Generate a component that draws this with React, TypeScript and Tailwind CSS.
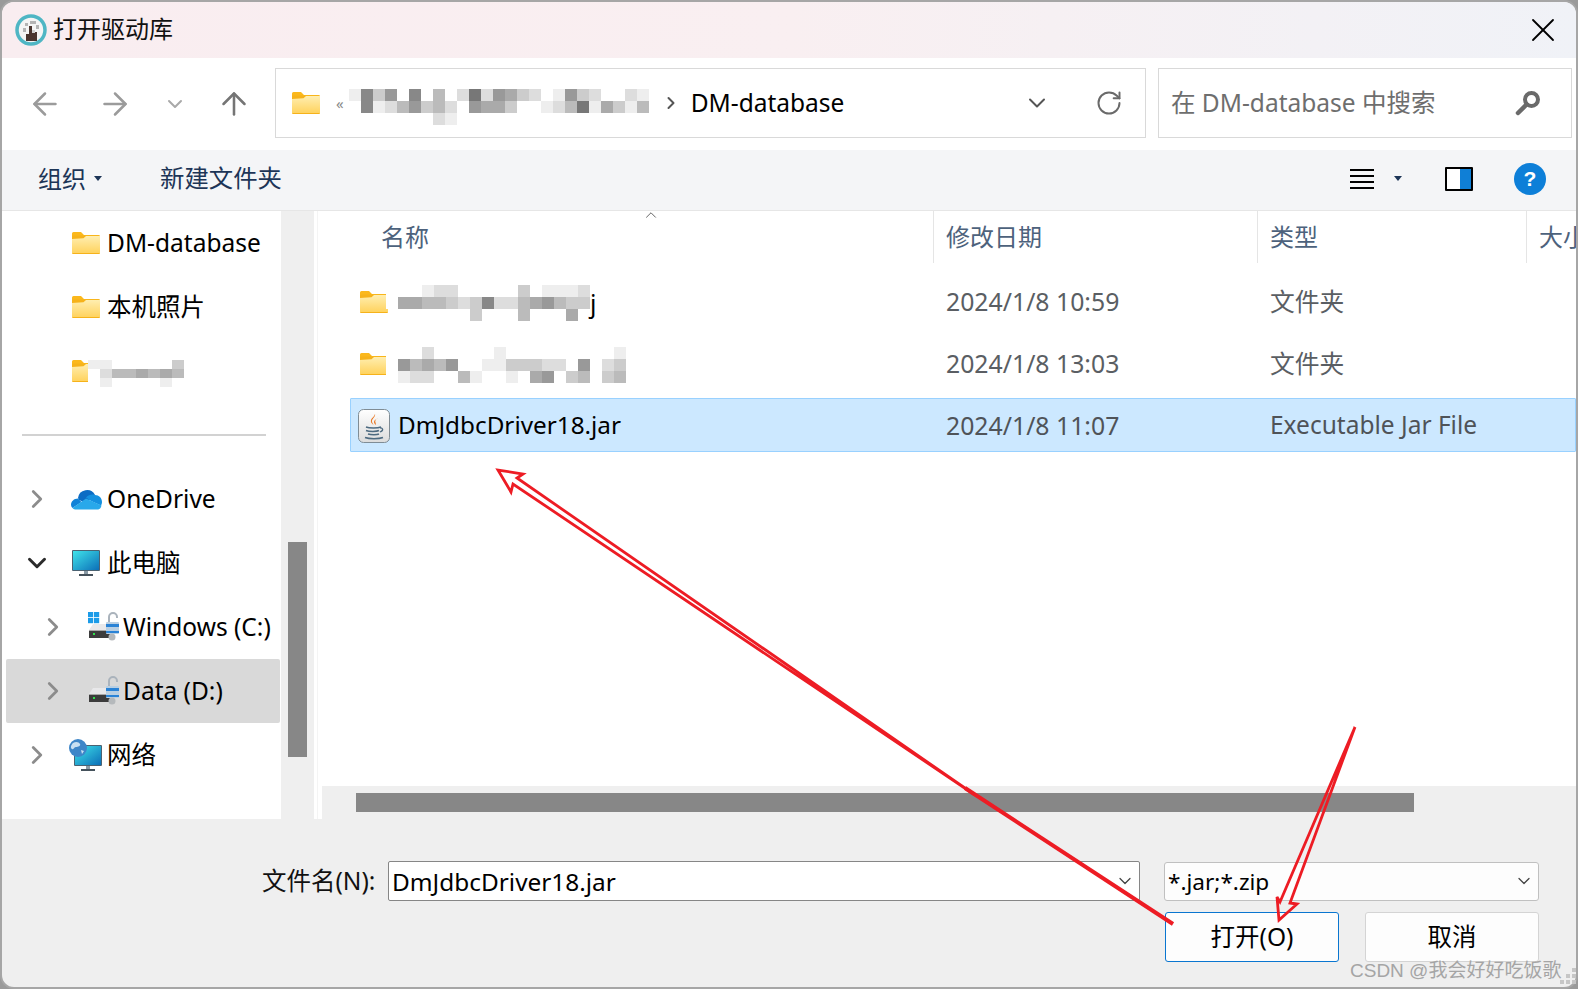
import React from "react";
import { ArrowLeft, ArrowRight, ArrowUp, ChevronDown, ChevronRight, ChevronUp, RotateCw, X } from "lucide-react";

const Mosaic = ({ rows, w = 12, h = 12, className = "" }: { rows: string[]; w?: number; h?: number; className?: string }) => (
  <div className={"absolute flex flex-col " + className}>
    {rows.map((r, i) => (
      <div key={i} className="flex">
        {r.split("").map((c, j) => (
          <div key={j} style={{ width: w, height: h, background: c === "." ? "transparent" : `#${c}${c}${c}` }} />
        ))}
      </div>
    ))}
  </div>
);

const Folder = ({ className = "" }: { className?: string }) => (
  <svg viewBox="0 0 28 22" className={"w-[28px] h-[22px] shrink-0 " + className}>
    <path d="M0 1.5A1.5 1.5 0 0 1 1.5 0h7.5l3 3h14.5A1.5 1.5 0 0 1 28 4.5V6H0z" fill="#fbb81c" />
    <rect x="0" y="3.5" width="28" height="18.5" rx="1" fill="#f6b21a" />
    <defs>
      <linearGradient id="fg" x1="0" y1="0" x2="0" y2="1">
        <stop offset="0" stopColor="#ffeeb0" />
        <stop offset="1" stopColor="#ffd35f" />
      </linearGradient>
    </defs>
    <path d="M0 7l11.5-.8L14 4h14v17H0z" fill="url(#fg)" />
  </svg>
);

const OneDrive = () => (
  <svg viewBox="0 0 32 22" className="w-[32px] h-[22px] shrink-0">
    <path d="M8 10a9 9 0 0 1 17-3l-9 8-7-3z" fill="#0c6cc4" />
    <path d="M8 10.5c-4 0-7 3-7 6 0 1.5.5 2.5 1.5 3.5l9-6z" fill="#0f82d8" />
    <path d="M16 9.5c3-3 6-3.5 9-2.5 4 0 7 3 7 7 0 1.500-.5 2.500-1 3.500L21 13z" fill="#1490df" />
    <path d="M2.500 20c1 1 2 1.500 4 1.500h21c2 0 3.500-1.500 4-4L16 10.500z" fill="#28a8ea" />
  </svg>
);

const Monitor = ({ className = "" }: { className?: string }) => (
  <svg viewBox="0 0 28 26" className={"w-[28px] h-[26px] shrink-0 " + className}>
    <defs>
      <linearGradient id="mg" x1="0" y1="0" x2="1" y2="1">
        <stop offset="0" stopColor="#3fe3ea" />
        <stop offset="1" stopColor="#0c6fb8" />
      </linearGradient>
    </defs>
    <rect x="0" y="0" width="28" height="21" rx="1" fill="#4b6272" />
    <rect x="1" y="1" width="26" height="19" fill="url(#mg)" />
    <rect x="12" y="21" width="4" height="3" fill="#8a9aa5" />
    <rect x="7" y="24" width="14" height="2" fill="#45525c" />
  </svg>
);

const Drive = ({ win }: { win?: boolean }) => (
  <svg viewBox="0 0 32 30" className="w-[32px] h-[30px] shrink-0">
    {win && (
      <g fill="#1b9be8">
        <rect x="0" y="0" width="5.200" height="5.200" />
        <rect x="6" y="0" width="5.200" height="5.200" />
        <rect x="0" y="6" width="5.200" height="5.200" />
        <rect x="6" y="6" width="5.200" height="5.200" />
      </g>
    )}
    <path d="M5 12h16v6H1z" fill="#e8e8ea" />
    <rect x="1" y="18" width="22" height="8" fill="#3c3c3c" />
    <rect x="1" y="18" width="22" height="1" fill="#a8a8a8" />
    <rect x="5" y="21" width="2" height="2" fill="#2fe34a" />
    <path d="M21 11V5a4 4 0 0 1 8 0v1" fill="none" stroke="#aab3bc" strokeWidth="2" />
    <rect x="18" y="10" width="13" height="12" rx="1" fill="#b9cfe2" />
    <rect x="18" y="12" width="13" height="3" fill="#2a83d6" />
    <rect x="18" y="19" width="13" height="2" fill="#2a83d6" />
    <circle cx="24" cy="25" r="3.500" fill="#b5b9bc" />
  </svg>
);

const Jar = () => (
  <svg viewBox="0 0 32 34" className="w-[32px] h-[34px] shrink-0">
    <defs>
      <linearGradient id="jg" x1="0" y1="0" x2="0" y2="1">
        <stop offset="0" stopColor="#ffffff" />
        <stop offset="1" stopColor="#dcdcdc" />
      </linearGradient>
    </defs>
    <rect x="0.500" y="0.500" width="31" height="33" rx="5" fill="url(#jg)" stroke="#7f8c95" />
    <path d="M17 5c1 3-4 5-3 8 .4 1 1 2 1.500 3-2-1.500-3-3-2.500-5 .5-2 3.500-3.500 4-6z" fill="#e8731c" />
    <path d="M20 9c-2 1.500-3.500 2.500-2.500 4.500l.5 2.500c-2-1.500-2.500-3-1.500-4.500C17.500 10.500 19 10 20 9z" fill="#e8731c" />
    <path d="M8 18c3 1.200 12 1.200 15 0M8 21.500c3 1.200 11 1.200 13 0M10 25c3 1 9 1 11 0M7 28.500c4 1.500 14 1.500 18 0" stroke="#4d6a80" strokeWidth="1.500" fill="none" />
    <path d="M22 19c3-.5 4 2.500 0 4" stroke="#4d6a80" strokeWidth="1.300" fill="none" />
  </svg>
);

const AppIcon = () => (
  <svg viewBox="0 0 32 32" className="w-[32px] h-[32px] shrink-0">
    <circle cx="16" cy="16" r="14" fill="#f5f5f5" stroke="#4fb6c4" strokeWidth="3.500" />
    <path d="M10 9h3v3h-3zM15 7h6v3h-6zM21 11h3v4h-3zM8 14h3v4H8z" fill="#b5b5b5" />
    <path d="M14 12h3v6h5v9h-11v-7h3z" fill="#4a352f" />
    <path d="M17 16h3v3h-3z" fill="#d0d0d0" />
  </svg>
);

const Row = ({ chev, indent, open, active, icon, children }: { chev?: boolean; indent?: boolean; open?: boolean; active?: boolean; icon: React.ReactNode; children?: React.ReactNode }) => (
  <div className={"flex items-center h-[64px] ml-[4px] mr-[1px] rounded-[2px] " + (active ? "bg-[#d9d9d9]" : "")}>
    <div className={"flex justify-center shrink-0 " + (indent ? "w-[62px] pl-[31px]" : "w-[62px]")}>
      {chev && (open ? <ChevronDown size={30} strokeWidth={2.4} className="text-[#2b2b2b]" /> : <ChevronRight size={30} strokeWidth={2.2} className="text-[#8c8c8c]" />)}
    </div>
    <div className={"flex items-center justify-center shrink-0 " + (indent ? "w-[32px] ml-[20px] mr-[3px]" : "w-[32px] ml-[2px] mr-[5px]")}>{icon}</div>
    <span className="pt-[1px] text-[24.5px] text-black whitespace-nowrap">{children}</span>
  </div>
);

export default function App() {
  return (
    <div className="relative w-[1578px] h-[989px] overflow-hidden bg-[#9a9a9a]" style={{ fontFamily: "'Noto Sans','Noto Sans CJK SC',sans-serif" }}>
      <div className="w-full h-full flex flex-col overflow-hidden rounded-[14px] border-2 border-[#a6a6a6] bg-[#efefef]">
        {/* title */}
        <div className="h-[56px] shrink-0 flex items-center pl-[13px] pr-[13px] bg-gradient-to-r from-[#f9edf0] via-[#f9eff1] to-[#f0f2f7]">
          <AppIcon />
          <span className="ml-[6px] -mt-[4px] text-[24px] text-[#111] leading-none" style={{ fontFamily: "'Noto Sans CJK SC',sans-serif" }}>打开驱动库</span>
          <X size={40} strokeWidth={1.1} className="ml-auto -mt-[1px] text-black" />
        </div>
        {/* nav */}
        <div className="h-[92px] shrink-0 bg-white flex items-start pt-[10px]">
          <div className="flex items-center h-[70px] pt-[1px] w-[273px] shrink-0 text-[#9b9b9b]">
            <ArrowLeft size={36} strokeWidth={1.7} className="ml-[25px]" />
            <ArrowRight size={36} strokeWidth={1.7} className="ml-[34px]" />
            <ChevronDown size={24} strokeWidth={2} className="ml-[30px] text-[#a9a9a9]" />
            <ArrowUp size={36} strokeWidth={1.7} className="ml-[29px] text-[#757575]" />
          </div>
          <div className="relative w-[871px] h-[70px] shrink-0 border border-[#d9d9d9] flex items-center pl-[16px]">
            <Folder />
            <span className="ml-[16px] text-[15px] text-[#8a8a8a]">«</span>
            <ChevronRight size={20} strokeWidth={2.4} className="ml-[317px] text-[#555]" />
            <span className="ml-[10px] text-[24.5px] text-black">DM-database</span>
            <ChevronDown size={28} strokeWidth={1.7} className="ml-auto mr-[44px] text-[#555]" />
            <RotateCw size={28} strokeWidth={1.7} className="mr-[22px] text-[#6a6a6a]" />
            <Mosaic className="left-[73px] top-[20px]" rows={["e8c9f8fbfd7d9acdfe9cdffdef", "f8edb9cbdf9aacffedb7eaceb", "fffffffdefffffffffffffff"]} />
          </div>
          <div className="w-[414px] h-[70px] ml-[12px] shrink-0 border border-[#d9d9d9] flex items-center pl-[12px] pr-[30px]">
            <span className="text-[24.5px] text-[#6e6e6e] whitespace-nowrap">在 DM-database 中搜索</span>
            <svg viewBox="0 0 26 26" className="ml-auto w-[26px] h-[26px]">
              <circle cx="16.500" cy="9.500" r="6.500" fill="none" stroke="#6a6a6a" strokeWidth="4" />
              <path d="M11.500 14.500L3 23" stroke="#6a6a6a" strokeWidth="4.500" strokeLinecap="round" />
            </svg>
          </div>
        </div>
        {/* toolbar */}
        <div className="h-[61px] shrink-0 bg-[#f4f5f7] border-b border-[#e6e6e6] flex items-center text-[#1d3557] pl-[36px] pr-[30px] pb-[3px]">
          <span className="text-[24px]">组织</span>
          <div className="ml-[8px] w-0 h-0 border-x-[4px] border-x-transparent border-t-[5px] border-t-[#1d3557]" />
          <span className="ml-[58px] text-[24.4px]">新建文件夹</span>
          <div className="ml-auto flex flex-col gap-[4px] w-[24px]">
            <div className="h-[2px] bg-black" />
            <div className="h-[2px] bg-black" />
            <div className="h-[2px] bg-black" />
            <div className="h-[2px] bg-black" />
          </div>
          <div className="ml-[20px] w-0 h-0 border-x-[4px] border-x-transparent border-t-[5px] border-t-[#1d3557]" />
          <div className="ml-[43px] w-[28px] h-[24px] border-2 border-black bg-gradient-to-r from-white from-[55%] to-[#0f7fd6] to-[55%] rounded-[1px]" />
          <div className="ml-[41px] w-[32px] h-[32px] rounded-full bg-[#0d7fd8] flex items-center justify-center text-white text-[21px] font-bold leading-none" style={{ fontFamily: "'Liberation Sans',sans-serif" }}>?</div>
        </div>
        {/* body */}
        <div className="h-[608px] shrink-0 flex bg-white">
          <div className="w-[279px] shrink-0 overflow-hidden">
            <Row icon={<Folder />}>DM-database</Row>
            <Row icon={<Folder />}>本机照片</Row>
            <div className="relative">
              <Row icon={<Folder />} />
              <Mosaic className="left-[86px] top-[21px]" rows={["eef....c", "fdbbabab", "fef.f.e."]} h={9} />
            </div>
            <div className="h-[64px] pt-[31px] pl-[20px]">
              <div className="w-[244px] h-[2px] bg-[#d2d2d2]" />
            </div>
            <Row chev icon={<OneDrive />}>OneDrive</Row>
            <Row chev open icon={<Monitor />}>此电脑</Row>
            <Row chev indent icon={<Drive win />}>Windows (C:)</Row>
            <Row chev indent active icon={<Drive />}>Data (D:)</Row>
            <Row chev icon={<div className="relative"><Monitor className="ml-[4px] mt-[6px]" /><svg viewBox="0 0 20 20" className="absolute -left-[2px] -top-[1px] w-[20px] h-[20px]"><circle cx="10" cy="10" r="9" fill="#3e86c8" /><path d="M5 5c3-2 6-1 7 1s-2 3-4 3-2 3-4 2-1-4 1-6zM13 12l3 1-2 3z" fill="#c9e0f2" /></svg></div>}>网络</Row>
          </div>
          <div className="w-[33px] shrink-0 bg-[#efefef] flex justify-center pl-[0px] relative">
            <div className="absolute left-[7px] top-[331px] w-[19px] h-[215px] bg-[#878787]" />
          </div>
          <div className="w-[4px] shrink-0 bg-white border-r border-[#f4f4f4]" />
          <div className="flex-1 min-w-0 flex flex-col relative">
            <ChevronUp size={18} strokeWidth={1.2} className="absolute left-[324px] -top-[5px] text-[#555]" />
            <div className="flex-1 min-h-0 overflow-hidden pl-[3px]">
              <div className="h-[55px] flex text-[24px] text-[#4d627c]">
                <div className="w-[613px] pl-[60px] pt-[8px] border-r border-[#e5e5e5] h-[52px]">名称</div>
                <div className="w-[324px] pl-[12px] pt-[8px] border-r border-[#e5e5e5] h-[52px]">修改日期</div>
                <div className="w-[269px] pl-[12px] pt-[8px] border-r border-[#e5e5e5] h-[52px]">类型</div>
                <div className="flex-1 min-w-0 pl-[12px] pt-[8px] whitespace-nowrap overflow-hidden">大小</div>
              </div>
              <div className="ml-[29px] mt-[9px] flex flex-col gap-[8px]">
                <div className="relative h-[54px] flex items-center text-[24.8px] text-[#5a5e63]">
                  <div className="w-[596px] flex items-center pl-[10px]">
                    <Folder />
                    <span className="ml-[202px] pt-[4px] text-black">j</span>
                  </div>
                  <div className="w-[324px]">2024/1/8 10:59</div>
                  <div>文件夹</div>
                  <Mosaic className="left-[36px] top-[10px]" rows={["fffeddfffffcfeeed", "faabbcdc8ddba9bcc", "....fffcfffbfffa."]} />
                </div>
                <div className="relative h-[54px] flex items-center text-[24.8px] text-[#5a5e63]">
                  <div className="w-[596px] flex items-center pl-[10px]"><Folder /></div>
                  <div className="w-[324px]">2024/1/8 13:03</div>
                  <div>文件夹</div>
                  <Mosaic className="left-[36px] top-[10px]" rows={["fffdfffffefffffffffe", "f9bab9ffeecccddf9fdc", "feddffbeffefa9fcbfcb"]} />
                </div>
                <div className="h-[54px] -mt-[1px] pt-[1px] flex items-center bg-[#cce8ff] border border-[#99d1ff] rounded-[1px] text-[24.5px]">
                  <div className="w-[595px] flex items-center pl-[7px]">
                    <Jar />
                    <span className="ml-[8px] text-[24.3px] text-black">DmJdbcDriver18.jar</span>
                  </div>
                  <div className="w-[324px] text-[24.8px] text-[#4f5358]">2024/1/8 11:07</div>
                  <div className="text-[#4f5358] whitespace-nowrap">Executable Jar File</div>
                </div>
              </div>
            </div>
            <div className="h-[33px] shrink-0 ml-[4px] bg-[#efefef] pt-[7px] pl-[34px]">
              <div className="w-[1058px] h-[19px] bg-[#878787]" />
            </div>
          </div>
        </div>
        {/* footer */}
        <div className="flex-1 min-h-0 pt-[42px] pr-[37px] flex flex-col">
          <div className="flex items-center pl-[260px]">
            <span className="w-[126px] text-[24.5px] text-[#111] whitespace-nowrap">文件名(N):</span>
            <div className="w-[752px] h-[40px] bg-white border border-[#868686] rounded-[2px] flex items-center pl-[3px] pr-[4px] text-[24.4px] text-black">
              <span className="pt-[2px]">DmJdbcDriver18.jar</span>
              <ChevronDown size={20} strokeWidth={1.5} className="ml-auto text-[#444]" />
            </div>
            <div className="ml-[24px] flex-1 h-[39px] bg-[#fdfdfd] border border-[#c0c0c0] rounded-[3px] flex items-center pl-[3px] pr-[4px] text-[22.6px] text-black">
              <span className="pt-[2px]">*.jar;*.zip</span>
              <ChevronDown size={20} strokeWidth={1.5} className="ml-auto text-[#444]" />
            </div>
          </div>
          <div className="mt-[11px] flex justify-end gap-[26px]">
            <div className="w-[174px] h-[50px] bg-[#fdfdfd] border border-[#0a76d0] rounded-[3px] flex items-center justify-center text-[24.5px] text-black">打开(O)</div>
            <div className="w-[174px] h-[50px] bg-[#fdfdfd] border border-[#d4d4d4] rounded-[3px] flex items-center justify-center text-[24.5px] text-black">取消</div>
          </div>
        </div>
      </div>

      {/* annotations */}
      <svg className="absolute left-0 top-0 w-[1578px] h-[989px] pointer-events-none" viewBox="0 0 1578 989" fill="none" strokeLinejoin="miter">
        <path d="M975 795L517 478L523 474L498 470L511 492L513 484L975 795" stroke="#ed1c24" strokeWidth="2.800" />
        <path d="M965 788L1173 924" stroke="#ed1c24" strokeWidth="4" />
        <path d="M1355 727L1280 902L1277 897L1279 920L1297 904L1290 903L1355 727" stroke="#ed1c24" strokeWidth="2.800" />
      </svg>
      <span className="absolute left-[1350px] top-[957px] text-[19px] leading-[28px] text-[#a5a5a5] whitespace-nowrap" style={{ fontFamily: "'Liberation Sans','Noto Sans CJK SC',sans-serif" }}>CSDN @我会好好吃饭歌</span>
      <div className="absolute left-[1560px] top-[968px] grid grid-cols-3 gap-[2px]">
        <div className="w-[4px] h-[4px]" /><div className="w-[4px] h-[4px]" /><div className="w-[4px] h-[4px] bg-[#c6c6c6]" />
        <div className="w-[4px] h-[4px]" /><div className="w-[4px] h-[4px] bg-[#c6c6c6]" /><div className="w-[4px] h-[4px] bg-[#c6c6c6]" />
        <div className="w-[4px] h-[4px] bg-[#c6c6c6]" /><div className="w-[4px] h-[4px] bg-[#c6c6c6]" /><div className="w-[4px] h-[4px] bg-[#c6c6c6]" />
      </div>
    </div>
  );
}
